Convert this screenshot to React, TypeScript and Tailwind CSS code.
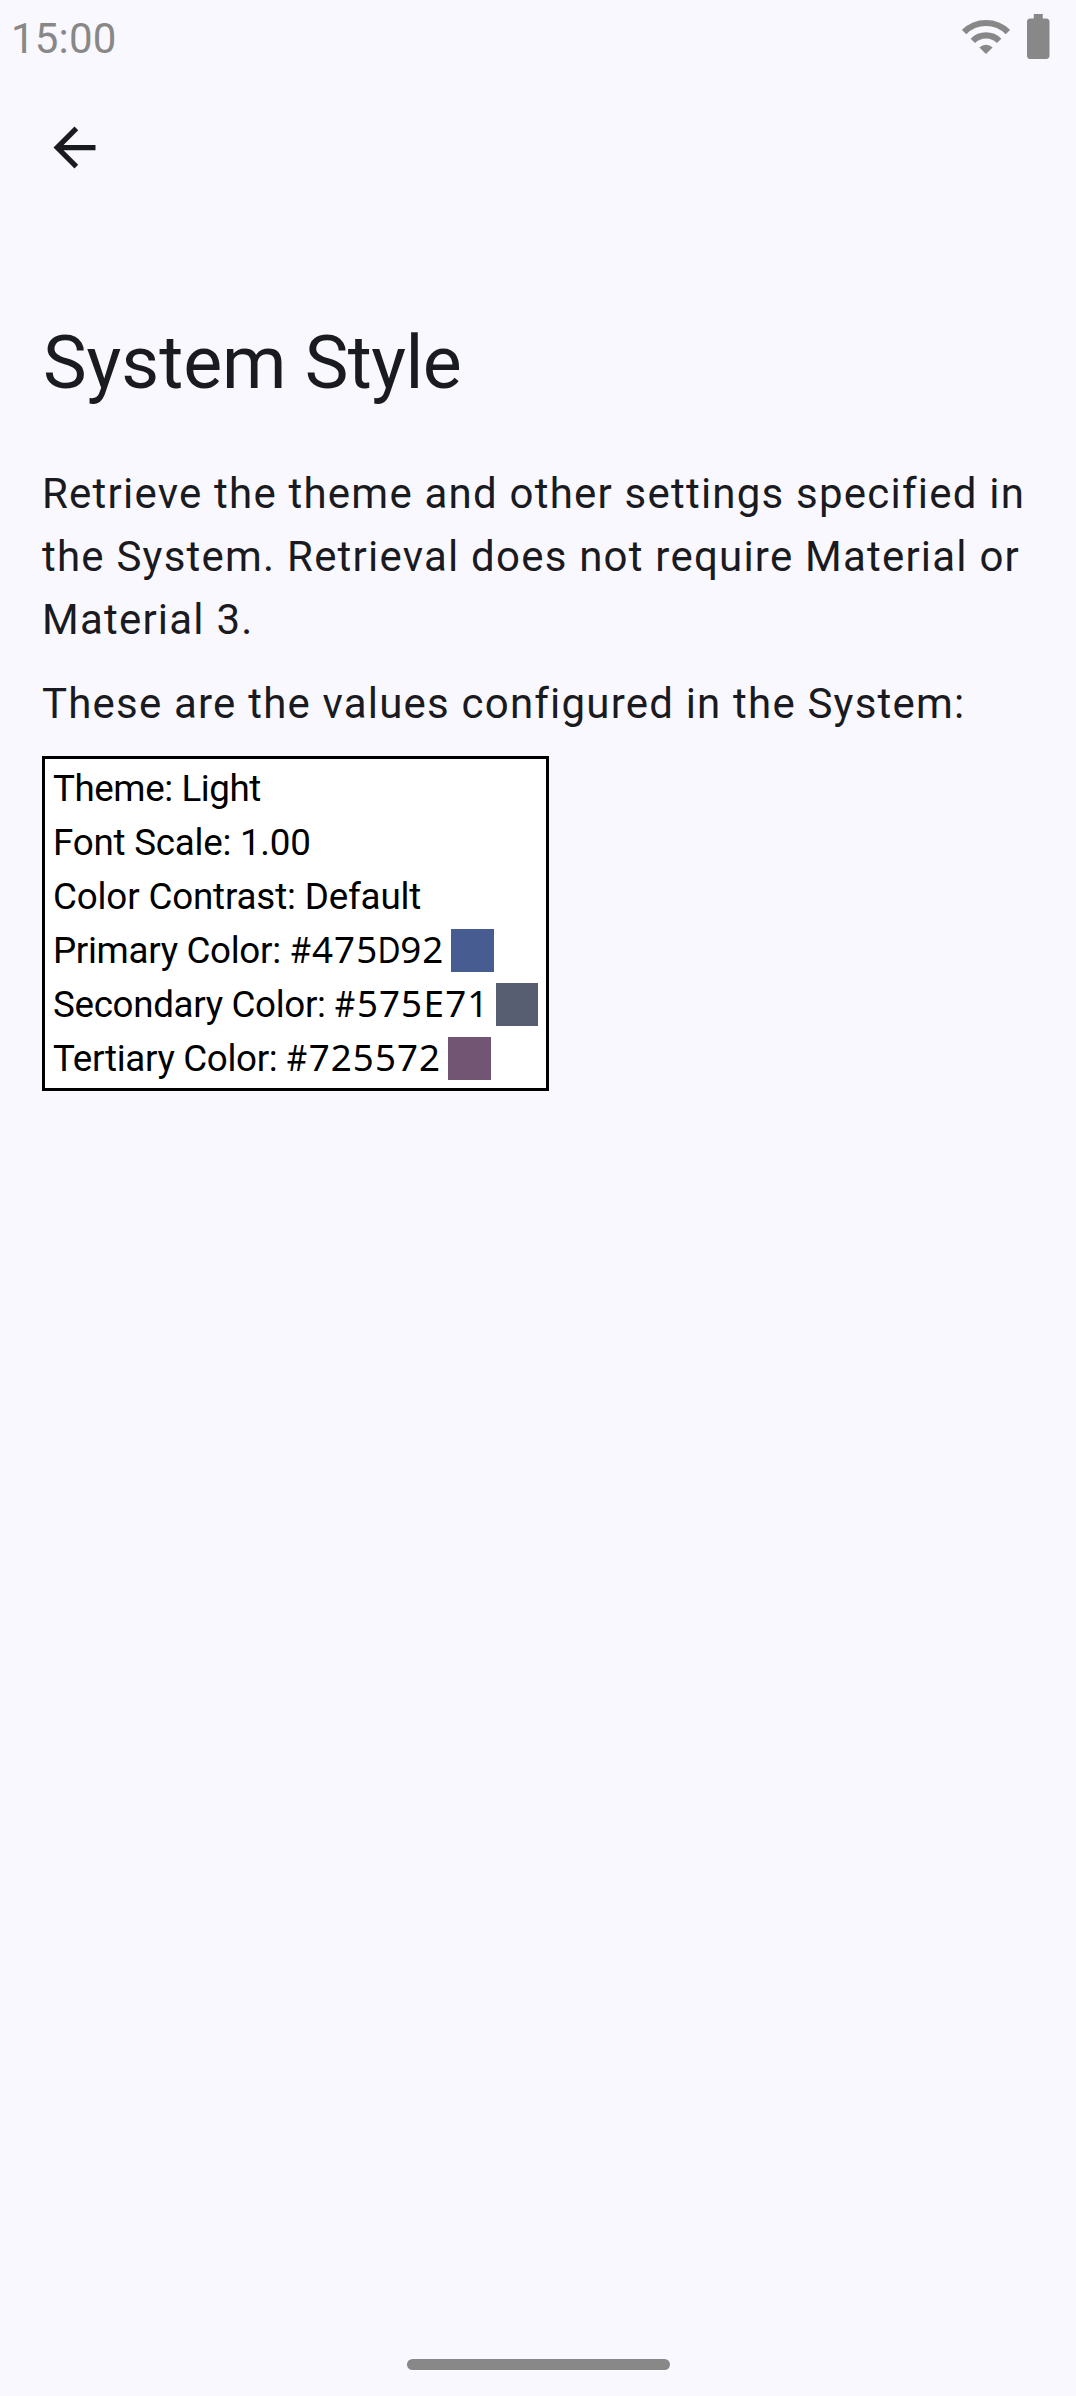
import React from "react";

type Row = { label: string; value: string; hex?: boolean; swatch?: string; track: string };

const rows: Row[] = [
  { label: "Theme: ", value: "Light", track: "tracking-[-0.43px]" },
  { label: "Font Scale: ", value: "1.00", track: "tracking-[-0.24px]" },
  { label: "Color Contrast: ", value: "Default", track: "tracking-[-0.16px]" },
  { label: "Primary Color: ", value: "#475D92", hex: true, swatch: "bg-[#475d92]", track: "pb-[2px] tracking-[-0.32px]" },
  { label: "Secondary Color: ", value: "#575E71", hex: true, swatch: "bg-[#575e71]", track: "pb-[2px] tracking-[-0.33px]" },
  { label: "Tertiary Color: ", value: "#725572", hex: true, swatch: "bg-[#725572]", track: "pb-[2px] tracking-[-0.33px]" },
];

// Hex codes are set on a fixed pitch, one cell per character.
function Hex({ value }: { value: string }) {
  return (
    <span className="flex font-['Noto_Sans',sans-serif] tracking-normal">
      {value.split("").map((c, i) => (
        <span
          key={i}
          className={"flex w-[22.05px] justify-center " + (c === "#" || c === "D" ? "scale-x-[0.86]" : "")}
        >
          {c}
        </span>
      ))}
    </span>
  );
}

function StatusBar() {
  return (
    <header className="flex h-[74px] items-start justify-between pr-[26.5px] pl-[11px] text-[#888888]">
      <span className="text-[42px] leading-[78px] tracking-[0.2px]">15:00</span>
      <div className="flex items-start gap-[17.5px] pt-[14px]">
        <svg className="mt-[5px] h-[36px] w-[48px]" viewBox="0 0 48 36" fill="none" stroke="currentColor" strokeWidth="6.2">
          <path d="M2.08 13.08A31 31 0 0 1 45.92 13.08M10.85 21.85A18.6 18.6 0 0 1 37.15 21.85" />
          <path d="M24 35L17.4 28.4A9.3 9.3 0 0 1 30.6 28.4Z" fill="currentColor" stroke="none" />
        </svg>
        <svg className="h-[45px] w-[22.5px]" viewBox="7 2 10 20" fill="currentColor">
          <path d="M15.67 4H14V2h-4v2H8.33C7.6 4 7 4.6 7 5.33v15.33C7 21.4 7.6 22 8.33 22h7.33c.74 0 1.34-.6 1.34-1.33V5.33C17 4.6 16.4 4 15.67 4z" />
        </svg>
      </div>
    </header>
  );
}

export default function App() {
  return (
    <div className="flex h-[2396px] w-[1076px] flex-col bg-[#faf8ff] font-['Roboto',sans-serif] text-[#1a1b20]">
      <StatusBar />
      <div className="flex h-[147px] items-center px-[43px]">
        <button aria-label="Back">
          <svg className="block h-[63px] w-[63px]" viewBox="0 0 24 24" fill="currentColor">
            <path d="M20 11H7.83l5.59-5.59L12 4l-8 8 8 8 1.41-1.41L7.83 13H20v-2z" />
          </svg>
        </button>
      </div>
      <main className="mt-[91px] flex flex-col items-start px-[42px]">
        <h1 className="ml-px text-[73.5px] leading-[102px] tracking-[-0.05px] whitespace-nowrap">
          System <span className="tracking-[-0.55px]">Style</span>
        </h1>
        <p className="mt-12 text-[42px] leading-[63px] tracking-[1.22px] whitespace-nowrap">
          Retrieve the theme and other settings specified in
          <br />
          the System. Retrieval does not require Material or
          <br />
          Material 3.
        </p>
        <p className="mt-[21px] text-[42px] leading-[63px] tracking-[1.2px] whitespace-nowrap">
          These are the values configured in the System:
        </p>
        <section className="mt-[21px] flex w-[507px] flex-col border-[3px] border-black bg-white px-2 pt-[3px] pb-[2px] text-[36.75px] leading-[54px] text-black">
          {rows.map((r) => (
            <div key={r.label} className="flex h-[54px] items-center whitespace-pre">
              <span className={"flex items-baseline " + r.track}>
                <span>{r.label}</span>
                {r.hex ? <Hex value={r.value} /> : <span>{r.value}</span>}
              </span>
              {r.swatch && <span className={"-mt-px ml-[7px] size-[43px] " + r.swatch} />}
            </div>
          ))}
        </section>
      </main>
      <div className="mt-auto mb-[26px] ml-[407px] h-[11px] w-[263px] rounded-full bg-[#888888]" />
    </div>
  );
}
